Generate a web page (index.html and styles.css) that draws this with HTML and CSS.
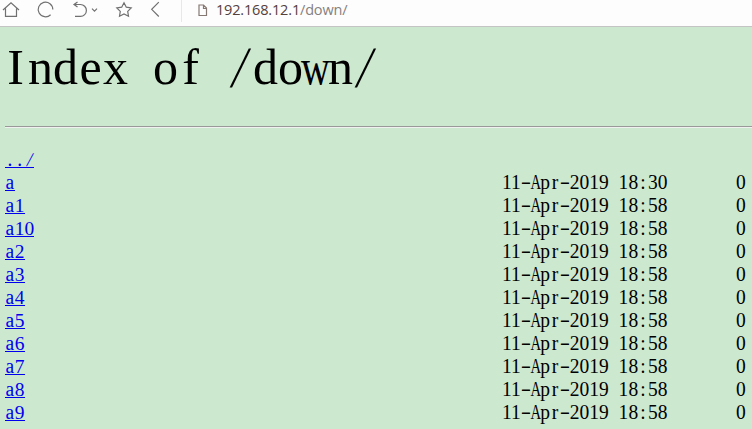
FILE: index.html
```
<!DOCTYPE html>
<html lang="en">
<head>
<meta charset="utf-8">
<title>Index of /down/</title>
<link rel="stylesheet" href="styles.css">
</head>
<body>
<header class="toolbar">
<div class="icons"><svg width="181" height="22" viewBox="0 0 181 22" fill="none" stroke="#707070" stroke-width="1.2">
<path d="M3 10 11 2.7 19 10M5.5 8.5V16.3H16.5V8.5"/>
<path d="M50.6 14.7A7.3 7.3 0 1 1 52.8 9.5"/>
<path d="M77.5 2 74 4.5 77.5 7M74 4.5H80.5A5.8 5.8 0 0 1 80.5 16.3H75"/>
<path d="M92 8.7 94.5 11.2 97 8.7"/>
<path d="M124 2.8 126.3 7.2 131.2 8 127.7 11.4 128.5 16.2 124 14 119.5 16.2 120.3 11.4 116.8 8 121.7 7.2Z"/>
<path d="M158.8 2.2 151.7 9.3 158.8 16.5"/>
</svg></div>
<svg class="page" width="10" height="13" viewBox="0 0 10 13" fill="none" stroke="#857873" stroke-width="1.2"><path d="M1 1H5.5L8.5 4V11.5H1ZM5.5 1V4.5H8.5"/></svg>
<div class="url">192.168.12.1<span>/down/</span></div>
</header>
<main>
<h1><b>I</b><b>n</b><b>d</b><b>e</b><b>x</b> <b>o</b><b>f</b> <b class="slash">/</b><b>d</b><b>o</b><b class="wide">w</b><b>n</b><b class="slash">/</b></h1>
<hr>
<div class="row"><a href="#"><b>.</b><b>.</b><b class="slash">/</b></a></div>
<div class="row"><a href="#"><b>a</b></a><span class="date">11<b class="dash">-</b><b class="wide">A</b>p<b>r</b><b class="dash">-</b>2019 18<b>:</b>30</span><span class="size">0</span></div>
<div class="row"><a href="#"><b>a</b>1</a><span class="date">11<b class="dash">-</b><b class="wide">A</b>p<b>r</b><b class="dash">-</b>2019 18<b>:</b>58</span><span class="size">0</span></div>
<div class="row"><a href="#"><b>a</b>10</a><span class="date">11<b class="dash">-</b><b class="wide">A</b>p<b>r</b><b class="dash">-</b>2019 18<b>:</b>58</span><span class="size">0</span></div>
<div class="row"><a href="#"><b>a</b>2</a><span class="date">11<b class="dash">-</b><b class="wide">A</b>p<b>r</b><b class="dash">-</b>2019 18<b>:</b>58</span><span class="size">0</span></div>
<div class="row"><a href="#"><b>a</b>3</a><span class="date">11<b class="dash">-</b><b class="wide">A</b>p<b>r</b><b class="dash">-</b>2019 18<b>:</b>58</span><span class="size">0</span></div>
<div class="row"><a href="#"><b>a</b>4</a><span class="date">11<b class="dash">-</b><b class="wide">A</b>p<b>r</b><b class="dash">-</b>2019 18<b>:</b>58</span><span class="size">0</span></div>
<div class="row"><a href="#"><b>a</b>5</a><span class="date">11<b class="dash">-</b><b class="wide">A</b>p<b>r</b><b class="dash">-</b>2019 18<b>:</b>58</span><span class="size">0</span></div>
<div class="row"><a href="#"><b>a</b>6</a><span class="date">11<b class="dash">-</b><b class="wide">A</b>p<b>r</b><b class="dash">-</b>2019 18<b>:</b>58</span><span class="size">0</span></div>
<div class="row"><a href="#"><b>a</b>7</a><span class="date">11<b class="dash">-</b><b class="wide">A</b>p<b>r</b><b class="dash">-</b>2019 18<b>:</b>58</span><span class="size">0</span></div>
<div class="row"><a href="#"><b>a</b>8</a><span class="date">11<b class="dash">-</b><b class="wide">A</b>p<b>r</b><b class="dash">-</b>2019 18<b>:</b>58</span><span class="size">0</span></div>
<div class="row"><a href="#"><b>a</b>9</a><span class="date">11<b class="dash">-</b><b class="wide">A</b>p<b>r</b><b class="dash">-</b>2019 18<b>:</b>58</span><span class="size">0</span></div>
</main>
</body>
</html>
```
FILE: styles.css
```
* { box-sizing: border-box; }
body {
  margin: 0;
  height: 429px;
  overflow: hidden;
  background: #cce8cf;
  color: #000;
  font-family: "Liberation Serif", serif;
}
.toolbar {
  display: flex;
  height: 27px;
  background: #fdfdfd;
  border-bottom: 1px solid #c4c4c4;
}
.icons { border-right: 1px solid #e8e8e8; height: 22px; }
.icons svg { display: block; }
.page { margin: 4px 0 0 16px; }
.url {
  margin-left: 8px;
  font: 14.5px/20px "Open Sans", sans-serif;
  letter-spacing: -.17px;
  color: #54403c;
}
.url span { color: #858080; }
main { padding-left: 5px; }

/* Fixed half-em character cells */
b {
  display: inline-block;
  width: .5em;
  font-weight: 400;
  text-align: center;
}
.wide { transform: scaleX(.75); text-indent: -.11em; }
.slash { transform: skewX(-11deg); }
.dash { transform: translateY(-1px) scaleX(1.6); }

h1 {
  margin: 0 0 0 -2px;
  height: 99px;
  padding-top: 11px;
  font-size: 50px;
  font-weight: 400;
  line-height: 58px;
  word-spacing: .25em;
  white-space: nowrap;
}
h1 .slash { transform: skewX(-11deg) scaleY(1.17); }
h1 .wide { transform: scaleX(.8); }
hr {
  margin: 0 0 20px 0;
  height: 2px;
  border: 0;
  border-top: 1px solid #999;
  border-bottom: 1px solid #f0f0f0;
}
.row {
  display: grid;
  grid-template-columns: 497px 234px 1fr;
  height: 23px;
  font-size: 19.5px;
  line-height: 23px;
  white-space: nowrap;
}
.date, .size { transform: scaleY(1.07); }
.date { word-spacing: .25em; letter-spacing: .04px; }
a {
  justify-self: start;
  height: 20px;
  color: #00e;
  text-decoration: none;
  border-bottom: 1px solid #00e;
}
a b { transform: scaleY(1.04); }
```
